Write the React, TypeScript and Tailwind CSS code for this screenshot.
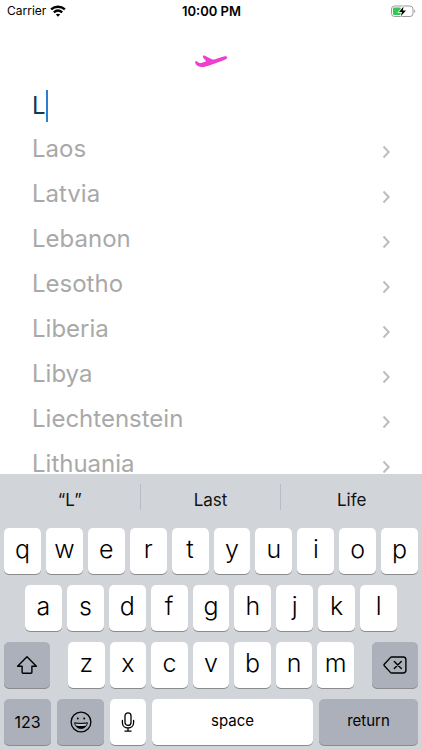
import React, { useState } from "react";

const countries = [
  "Laos",
  "Latvia",
  "Lebanon",
  "Lesotho",
  "Liberia",
  "Libya",
  "Liechtenstein",
  "Lithuania",
];

const suggestions = ["“L”", "Last", "Life"];

function StatusBar() {
  return (
    <header className="grid h-[22px] shrink-0 grid-cols-3 items-center pr-1.5 pl-[7px] text-black">
      <div className="flex items-center gap-1">
        <span className="text-[12px]">Carrier</span>
        <svg viewBox="0 0 16 12" className="h-3 w-4" fill="none" stroke="black" strokeWidth="2.4">
          <path d="M1.1 4.4C5 .8 11 .8 14.9 4.4" />
          <path d="M3.8 7.4c2.5-2.2 5.9-2.2 8.4 0" />
          <path d="M8 11.8 5.8 9.5c1.3-1 3.1-1 4.4 0z" fill="black" stroke="none" />
        </svg>
      </div>
      <time className="text-center text-[13px] leading-[22px] font-semibold">10:00 PM</time>
      <svg viewBox="0 0 26 13" className="h-[13px] w-[26px] justify-self-end" fill="none">
        <rect x="1.5" y="1" width="21.5" height="10.5" rx="3" stroke="#9b9b9b" />
        <rect x="3" y="2.500" width="8" height="7.500" rx="1.2" fill="#35c759" />
        <path d="M24.300 4.600c1.300.5 1.300 2.900 0 3.400z" fill="#8c8c8c" />
        <path
          d="M13.600 1.400 9 6.900h3l-1.200 4.300 5.200-5.700h-3.200z"
          fill="black"
          stroke="white"
          strokeWidth="1.600"
          paintOrder="stroke"
        />
      </svg>
    </header>
  );
}

function PlaneLogo() {
  return (
    <svg viewBox="0 0 34 14" className="mx-auto h-[14px] w-[34px] shrink-0" fill="#ee3fd0">
      <path d="M1.200 8.800C.7 7.400 2 6.700 3.200 7.500l1.700 1.200c.7.500 1.500.5 2.400.2l4.900-1.700-2.800-3.300C8.200 2.400 9.200 1 10.900 1.700l7 3.600c.8.400 1.500.4 2.400.1l10.200-3.100c2.800-.7 3.800 1.800 1.300 2.900-1.700.8-9.300 3.700-15.800 6-4.100 1.500-7.300 2.100-10 1.600C3.300 12.300 1.800 10.900 1.200 8.800z" />
    </svg>
  );
}

function ChevronIcon() {
  return (
    <svg
      viewBox="0 0 8 14"
      className="mt-[7px] h-[14px] w-2"
      fill="none"
      stroke="#bcbcc0"
      strokeWidth="1.9"
    >
      <path d="m1.500 1.500 5.200 5.500-5.200 5.500" />
    </svg>
  );
}

function ShiftIcon() {
  return (
    <svg viewBox="0 0 22 20" className="h-5 w-[22px]" fill="none" stroke="black" strokeWidth="1.4" strokeLinejoin="round">
      <path d="M11 1.700 1.600 11.200h4.500v6q0 1 1 1h7.800q1 0 1-1v-6h4.500z" />
    </svg>
  );
}

function DeleteIcon() {
  return (
    <svg
      viewBox="0 0 24 18"
      className="h-[18px] w-6"
      fill="none"
      stroke="black"
      strokeWidth="1.4"
      strokeLinecap="round"
      strokeLinejoin="round"
    >
      <path d="M8.900 1h11.300a2.700 2.700 0 0 1 2.700 2.700v10.600a2.700 2.700 0 0 1-2.700 2.700H8.900q-.9 0-1.500-.6L1.300 9.700q-.6-.7 0-1.400L7.400 1.600Q8 1 8.900 1z" />
      <path d="m11.300 5.500 7 7m0-7-7 7" />
    </svg>
  );
}

function EmojiIcon() {
  return (
    <svg viewBox="0 0 22 22" className="h-[22px] w-[22px]" fill="none" stroke="black">
      <circle cx="11" cy="11" r="9.900" strokeWidth="1.300" />
      <circle cx="7.800" cy="7.500" r="1" fill="black" stroke="none" />
      <circle cx="14.200" cy="7.500" r="1" fill="black" stroke="none" />
      <path d="M4.500 11.700q6.500 1.200 13 0c-.5 3.500-3.200 5.800-6.500 5.800s-6-2.300-6.500-5.800z" fill="black" strokeWidth=".7" strokeLinejoin="round" />
      <path d="M5.200 12.500q5.800 1 11.600 0l-.7 1.900q-5.100 1.200-10.200 0z" fill="#c3c7cf" stroke="none" />
    </svg>
  );
}

function MicIcon() {
  return (
    <svg viewBox="0 0 14 20" className="h-5 w-[14px]" fill="none" stroke="black" strokeWidth="1.3" strokeLinecap="round">
      <rect x="4" y=".8" width="6" height="12.600" rx="3" />
      <path d="M1.400 8.500v2.300c0 3.100 2.400 5.200 5.600 5.200s5.600-2.100 5.600-5.200V8.500M7 16v3M4 19.200h6" />
    </svg>
  );
}

type KeyProps = {
  label: string;
  className: string;
  children?: React.ReactNode;
  onClick?: () => void;
};

function Key({ label, className, children, onClick }: KeyProps) {
  return (
    <button
      type="button"
      aria-label={label}
      onClick={onClick}
      className={`flex h-[46px] items-center justify-center rounded-[5px] text-black shadow-[0_1px_0_#898b8f] ${className}`}
    >
      {children}
    </button>
  );
}

function Letters({ letters, onType }: { letters: string; onType: (letter: string) => void }) {
  return (
    <>
      {letters.split("").map((letter) => (
        <Key
          key={letter}
          label={letter}
          className="flex-1 bg-white pb-1 text-[25px] leading-8 font-light"
          onClick={() => onType(letter)}
        >
          {letter}
        </Key>
      ))}
    </>
  );
}

function Keyboard({ onType, onDelete }: { onType: (letter: string) => void; onDelete: () => void }) {
  return (
    <section className="shrink-0 bg-[#d1d4d9] pb-[5px]">
      <div className="grid h-[54px] grid-cols-3 items-start divide-x divide-[#b9bcc2] pt-[10px]">
        {suggestions.map((word) => (
          <button key={word} type="button" className="h-[26px] pt-1 text-[17px] leading-6 text-[#111]">
            {word}
          </button>
        ))}
      </div>
      <div className="flex flex-col gap-[11px] px-1">
        <div className="flex gap-[5px]">
          <Letters letters="qwertyuiop" onType={onType} />
        </div>
        <div className="flex gap-[5px] px-[21px]">
          <Letters letters="asdfghjkl" onType={onType} />
        </div>
        <div className="flex gap-[18px]">
          <Key label="shift" className="w-[46px] bg-[#abb0bb]">
            <ShiftIcon />
          </Key>
          <div className="flex flex-1 gap-[5px]">
            <Letters letters="zxcvbnm" onType={onType} />
          </div>
          <Key label="delete" className="w-[46px] bg-[#abb0bb]" onClick={onDelete}>
            <DeleteIcon />
          </Key>
        </div>
        <div className="flex gap-[6px]">
          <Key label="123" className="w-[47px] bg-[#abb0bb] text-[16px]">
            123
          </Key>
          <Key label="emoji" className="w-[47px] bg-[#abb0bb]">
            <EmojiIcon />
          </Key>
          <Key label="dictate" className="w-[36px] bg-white">
            <MicIcon />
          </Key>
          <Key label="space" className="flex-1 bg-white pb-0.5 text-[15px]" onClick={() => onType(" ")}>
            space
          </Key>
          <Key label="return" className="w-[99px] bg-[#abb0bb] pb-0.5 text-[15px]">
            return
          </Key>
        </div>
      </div>
    </section>
  );
}

export default function App() {
  const [query, setQuery] = useState("L");
  const matches = countries.filter((name) => name.toLowerCase().startsWith(query.toLowerCase()));

  return (
    <div className="flex h-screen flex-col bg-white font-['Inter',sans-serif]">
      <StatusBar />
      <main className="flex min-h-0 flex-1 flex-col overflow-hidden px-8 pt-8">
        <PlaneLogo />
        <div className="mt-[22px] flex h-8 shrink-0 items-center">
          <input
            type="text"
            aria-label="Country"
            value={query}
            onChange={(e) => setQuery(e.target.value)}
            className="field-sizing-content h-8 text-[24px] leading-8 text-[#10384f] caret-transparent outline-none"
          />
          <span className="h-8 w-0.5 bg-[#2a7fd0]" />
        </div>
        <ul className="mt-1">
          {matches.map((name) => (
            <li key={name}>
              <a href="#" className="flex h-[45px] items-center justify-between">
                <span className="text-[24px] leading-8 text-[#a9a9a9]">{name}</span>
                <ChevronIcon />
              </a>
            </li>
          ))}
        </ul>
      </main>
      <Keyboard
        onType={(letter) => setQuery(query + letter)}
        onDelete={() => setQuery(query.slice(0, -1))}
      />
    </div>
  );
}
